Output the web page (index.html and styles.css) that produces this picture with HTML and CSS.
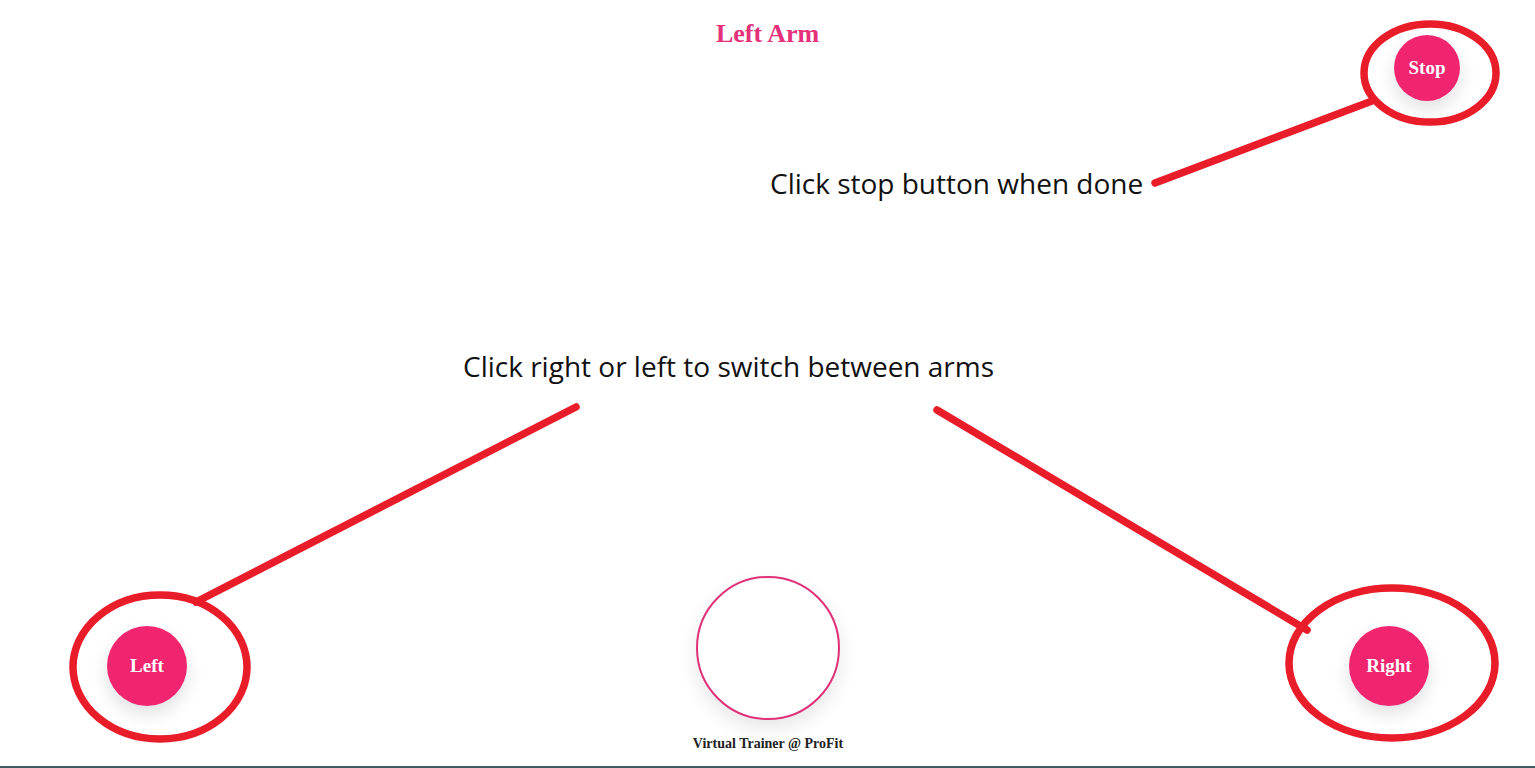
FILE: index.html
```html
<!DOCTYPE html>
<html lang="en">
<head>
<meta charset="utf-8">
<title>Virtual Trainer</title>
<link rel="stylesheet" href="styles.css">
</head>
<body>
<div class="page">
  <header class="top">
    <div class="top-side"></div>
    <h1 class="title">Left Arm</h1>
    <div class="top-side top-right">
      <button class="btn btn-stop">Stop</button>
    </div>
  </header>
  <main class="stage"></main>
  <section class="controls">
    <button class="btn btn-side">Left</button>
    <div class="center-col">
      <div class="ring"></div>
      <p class="footer">Virtual Trainer @ ProFit</p>
    </div>
    <button class="btn btn-side">Right</button>
  </section>
</div>

<div class="notes">
  <svg class="notes-svg" width="1535" height="768" viewBox="0 0 1535 768">
    <g fill="none" stroke="#e91d2a" stroke-width="7.5" stroke-linecap="round">
      <ellipse cx="1430" cy="73" rx="66" ry="49"/>
      <line x1="1155" y1="183" x2="1372" y2="101"/>
      <ellipse cx="160" cy="667" rx="87" ry="72"/>
      <line x1="576" y1="407" x2="196" y2="602"/>
      <ellipse cx="1392" cy="663" rx="103" ry="75"/>
      <line x1="937" y1="410" x2="1307" y2="630"/>
    </g>
  </svg>
  <div class="note note-stop">Click stop button when done</div>
  <div class="note note-arms">Click right or left to switch between arms</div>
</div>
</body>
</html>
```

FILE: styles.css
```css
* { box-sizing: border-box; }

html, body {
  margin: 0;
  padding: 0;
  background: #ffffff;
}

body {
  position: relative;
  font-family: "Liberation Serif", "Times New Roman", serif;
}

.page {
  height: 768px;
  display: flex;
  flex-direction: column;
  border-bottom: 2px solid #3e5b5f;
}

.top {
  display: grid;
  grid-template-columns: 1fr auto 1fr;
  align-items: start;
}

.title {
  margin: 19px 0 0;
  font-size: 26px;
  line-height: 30px;
  font-weight: bold;
  color: #e5307a;
  text-align: center;
}

.top-right {
  display: flex;
  justify-content: flex-end;
  padding: 35px 75px 0 0;
}

.btn {
  border: none;
  border-radius: 50%;
  background: #f1246f;
  color: #ffffff;
  font-family: "Liberation Serif", "Times New Roman", serif;
  font-weight: bold;
  font-size: 19px;
  padding: 0;
  display: flex;
  align-items: center;
  justify-content: center;
  box-shadow: 0 8px 18px rgba(0, 0, 0, 0.12);
}

.btn-stop {
  width: 66px;
  height: 66px;
}

.btn-side {
  width: 80px;
  height: 80px;
  margin-top: 4px;
}

.stage {
  flex: 1;
}

.controls {
  display: flex;
  justify-content: space-between;
  align-items: center;
  padding: 0 106px 14px 107px;
}

.center-col {
  display: flex;
  flex-direction: column;
  align-items: center;
}

.ring {
  width: 144px;
  height: 144px;
  border-radius: 50%;
  border: 2px solid #e0307a;
  background: #ffffff;
  box-shadow: 0 8px 20px rgba(0, 0, 0, 0.10);
}

.footer {
  margin: 16px 0 0;
  font-size: 14px;
  line-height: 16px;
  font-weight: bold;
  color: #222222;
}

.notes {
  position: absolute;
  left: 0;
  top: 0;
  width: 1535px;
  height: 768px;
  pointer-events: none;
}

.notes-svg {
  position: absolute;
  left: 0;
  top: 0;
}

.note {
  position: absolute;
  font-family: "Open Sans", "Noto Sans", sans-serif;
  font-size: 28px;
  line-height: 36px;
  color: #111111;
  white-space: nowrap;
}

.note-stop {
  left: 770px;
  top: 165px;
}

.note-arms {
  left: 463px;
  top: 348px;
}
```
